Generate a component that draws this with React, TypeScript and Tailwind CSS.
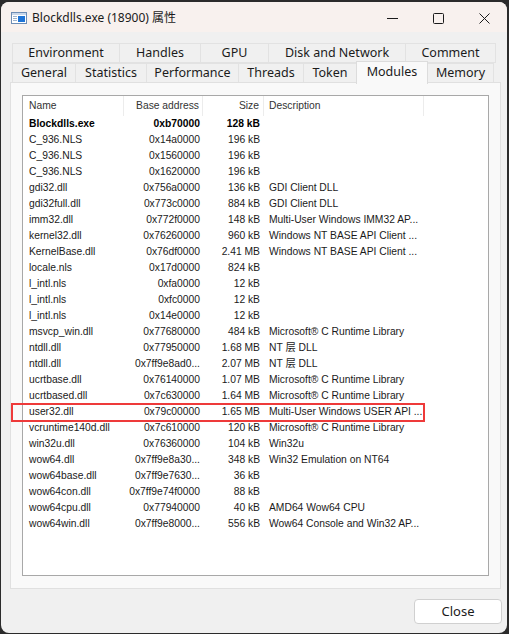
import React from "react";

type Row = { name: string; base: string; size: string; desc: string; bold?: boolean };

const rows: Row[] = [
  { name: "Blockdlls.exe", base: "0xb70000", size: "128 kB", desc: "", bold: true },
  { name: "C_936.NLS", base: "0x14a0000", size: "196 kB", desc: "" },
  { name: "C_936.NLS", base: "0x1560000", size: "196 kB", desc: "" },
  { name: "C_936.NLS", base: "0x1620000", size: "196 kB", desc: "" },
  { name: "gdi32.dll", base: "0x756a0000", size: "136 kB", desc: "GDI Client DLL" },
  { name: "gdi32full.dll", base: "0x773c0000", size: "884 kB", desc: "GDI Client DLL" },
  { name: "imm32.dll", base: "0x772f0000", size: "148 kB", desc: "Multi-User Windows IMM32 AP..." },
  { name: "kernel32.dll", base: "0x76260000", size: "960 kB", desc: "Windows NT BASE API Client ..." },
  { name: "KernelBase.dll", base: "0x76df0000", size: "2.41 MB", desc: "Windows NT BASE API Client ..." },
  { name: "locale.nls", base: "0x17d0000", size: "824 kB", desc: "" },
  { name: "l_intl.nls", base: "0xfa0000", size: "12 kB", desc: "" },
  { name: "l_intl.nls", base: "0xfc0000", size: "12 kB", desc: "" },
  { name: "l_intl.nls", base: "0x14e0000", size: "12 kB", desc: "" },
  { name: "msvcp_win.dll", base: "0x77680000", size: "484 kB", desc: "Microsoft\u00ae C Runtime Library" },
  { name: "ntdll.dll", base: "0x77950000", size: "1.68 MB", desc: "NT 层 DLL" },
  { name: "ntdll.dll", base: "0x7ff9e8ad0...", size: "2.07 MB", desc: "NT 层 DLL" },
  { name: "ucrtbase.dll", base: "0x76140000", size: "1.07 MB", desc: "Microsoft\u00ae C Runtime Library" },
  { name: "ucrtbased.dll", base: "0x7c630000", size: "1.64 MB", desc: "Microsoft\u00ae C Runtime Library" },
  { name: "user32.dll", base: "0x79c00000", size: "1.65 MB", desc: "Multi-User Windows USER API ..." },
  { name: "vcruntime140d.dll", base: "0x7c610000", size: "120 kB", desc: "Microsoft\u00ae C Runtime Library" },
  { name: "win32u.dll", base: "0x76360000", size: "104 kB", desc: "Win32u" },
  { name: "wow64.dll", base: "0x7ff9e8a30...", size: "348 kB", desc: "Win32 Emulation on NT64" },
  { name: "wow64base.dll", base: "0x7ff9e7630...", size: "36 kB", desc: "" },
  { name: "wow64con.dll", base: "0x7ff9e74f0000", size: "88 kB", desc: "" },
  { name: "wow64cpu.dll", base: "0x77940000", size: "40 kB", desc: "AMD64 Wow64 CPU" },
  { name: "wow64win.dll", base: "0x7ff9e8000...", size: "556 kB", desc: "Wow64 Console and Win32 AP..." },
];

const row1 = [
  { label: "Environment", w: "w-[108px]" },
  { label: "Handles", w: "w-[82px]" },
  { label: "GPU", w: "w-[69px]" },
  { label: "Disk and Network", w: "w-[138px]" },
  { label: "Comment", w: "w-[91px]" },
];

const row2 = [
  { label: "General", w: "w-[64px]" },
  { label: "Statistics", w: "w-[72px]" },
  { label: "Performance", w: "w-[93px]" },
  { label: "Threads", w: "w-[66px]" },
  { label: "Token", w: "w-[54px]" },
  { label: "Modules", w: "w-[72px]", selected: true },
  { label: "Memory", w: "w-[67px]" },
];

const uiFont = { fontFamily: '"Noto Sans", "Noto Sans CJK SC", sans-serif' };
const listFont = { fontFamily: '"Liberation Sans", "Noto Sans CJK SC", sans-serif' };

export default function App() {
  return (
    <div className="w-[509px] h-[634px] bg-[#2b2b2b] pt-[2px] pl-[1px] overflow-hidden">
      <div
        className="relative w-[506px] h-[631px] rounded-lg bg-[#f0f0f0] flex flex-col overflow-hidden text-[#1b1b1b]"
        style={uiFont}
      >
        {/* Title bar */}
        <div className="h-[30px] bg-[#f8f1ee] flex items-center shrink-0">
          <svg className="ml-[10px] mt-[2px]" width="16" height="12" viewBox="0 0 16 12">
            <rect x="0.5" y="0.5" width="15" height="11" fill="#ffffff" stroke="#6e8db5" />
            <rect x="1" y="1" width="14" height="2" fill="#c9d7ea" />
            <rect x="2" y="4" width="4" height="1" fill="#9fb3cc" />
            <rect x="2" y="6" width="4" height="1" fill="#9fb3cc" />
            <rect x="2" y="8" width="4" height="1" fill="#9fb3cc" />
            <rect x="7" y="4" width="7" height="6" fill="#1f74d6" />
          </svg>
          <span className="ml-[5px] mt-[1px] text-[12px] leading-none">Blockdlls.exe (18900) 属性</span>
          <div className="ml-auto flex items-center h-full">
            <div className="w-[46px] h-full flex items-center justify-center">
              <svg width="11" height="11" viewBox="0 0 11 11" className="mt-[2px]">
                <line x1="0" y1="5.5" x2="11" y2="5.5" stroke="#1b1b1b" strokeWidth="1" />
              </svg>
            </div>
            <div className="w-[46px] h-full flex items-center justify-center">
              <svg width="11" height="11" viewBox="0 0 11 11" className="mt-[2px]">
                <rect x="0.5" y="0.5" width="10" height="10" rx="1" fill="none" stroke="#1b1b1b" strokeWidth="1" />
              </svg>
            </div>
            <div className="w-[46px] h-full flex items-center justify-center">
              <svg width="11" height="11" viewBox="0 0 11 11" className="mt-[2px]">
                <path d="M0.5 0.5 L10.5 10.5 M10.5 0.5 L0.5 10.5" stroke="#1b1b1b" strokeWidth="1" />
              </svg>
            </div>
          </div>
        </div>

        {/* Body */}
        <div className="flex-1 flex flex-col pt-[11px] pl-[9px] pr-[5px]">
          <div className="pl-[2px] flex flex-col">
            <div className="flex h-[20px]">
              {row1.map((t) => (
                <div
                  key={t.label}
                  className={`${t.w} h-full border border-[#e2e2e2] -ml-px first:ml-0 bg-[#f0f0f0] flex items-center justify-center text-[12.5px] leading-none`}
                >
                  {t.label}
                </div>
              ))}
            </div>
            <div className="flex h-[20px] items-end">
              {row2.map((t) =>
                t.selected ? (
                  <div
                    key={t.label}
                    className={`${t.w} h-[23px] -mb-px relative z-10 border border-b-0 border-[#dcdcdc] -ml-px bg-[#f9f9f9] flex items-start pt-[4px] justify-center text-[12.5px] leading-none`}
                  >
                    {t.label}
                  </div>
                ) : (
                  <div
                    key={t.label}
                    className={`${t.w} h-[20px] border border-[#e2e2e2] -ml-px first:ml-0 bg-[#f0f0f0] flex items-center justify-center text-[12.5px] leading-none`}
                  >
                    {t.label}
                  </div>
                )
              )}
            </div>
          </div>

          {/* Panel */}
          <div className="w-[491px] h-[507px] -mt-px border border-[#e0e0e0] bg-[#f9f9f9] pt-[12px] px-[11px]">
            <div className="h-[481px] border border-[#a8a8a8] bg-white text-[10.3px] text-[#1a1a1a]" style={listFont}>
              <div className="flex h-[20px] items-center text-[#333]">
                <div className="w-[101px] h-full flex items-center pl-[6px] border-r border-[#ececec]">Name</div>
                <div className="w-[79px] h-full flex items-center justify-end pr-[3px] border-r border-[#ececec]">Base address</div>
                <div className="w-[61px] h-full flex items-center justify-end pr-[4px] border-r border-[#ececec]">Size</div>
                <div className="w-[160px] h-full flex items-center pl-[5px] border-r border-[#ececec]">Description</div>
              </div>
              {rows.map((r, i) => (
                <div key={i} className={`flex h-[16px] items-center whitespace-nowrap ${r.bold ? "font-bold text-black" : ""}`}>
                  <div className="w-[101px] pl-[6px] overflow-hidden">{r.name}</div>
                  <div className="w-[79px] pr-[3px] text-right overflow-hidden">{r.base}</div>
                  <div className="w-[61px] pr-[4px] text-right">{r.size}</div>
                  <div className="w-[160px] pl-[5px] overflow-hidden">{r.desc}</div>
                </div>
              ))}
            </div>
          </div>

          {/* Buttons */}
          <div className="flex justify-end mt-[10px]">
            <button className="w-[88px] h-[25px] bg-white border border-[#d0d0d0] rounded-[4px] text-[13px] leading-none flex items-center justify-center text-[#1b1b1b]">
              Close
            </button>
          </div>
        </div>

        {/* Red highlight */}
        <div className="absolute left-[10px] top-[401px] w-[414px] h-[19px] border-2 border-[#ee3a3a]" />
      </div>
    </div>
  );
}
